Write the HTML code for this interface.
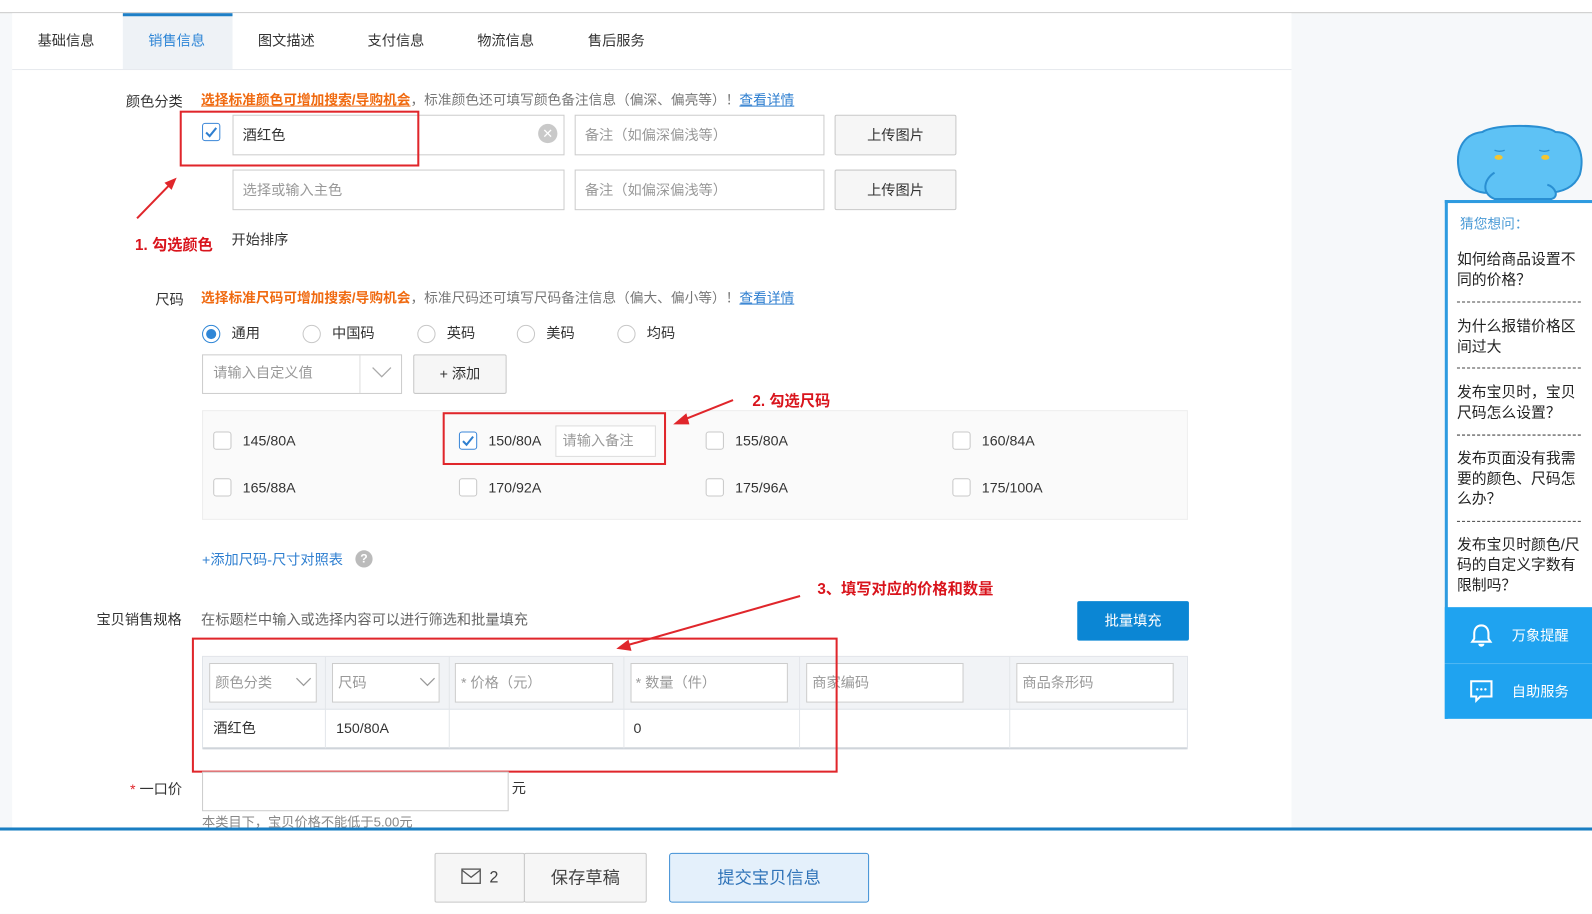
<!DOCTYPE html>
<html><head><meta charset="utf-8"><style>
html,body{margin:0;padding:0;width:1592px;height:911px;overflow:hidden;background:#f6f8fa}
#w{position:absolute;left:0;top:0;width:1568px;height:897px;transform:scale(1.01531);transform-origin:0 0;font-family:"Liberation Sans","Noto Sans CJK SC",sans-serif;font-size:14px;color:#333}
.a{position:absolute}
.t{position:absolute;white-space:nowrap;line-height:1}
.in{position:absolute;border:1px solid #ccc;background:#fff;box-sizing:border-box}
.ph{color:#999}
.cb{position:absolute;width:18px;height:18px;border:1px solid #c8c8c8;border-radius:3px;background:#fff;box-sizing:border-box}
.cbc{border-color:#3a86d8}
.rd{position:absolute;width:18px;height:18px;border:1px solid #c8c8c8;border-radius:50%;background:#fff;box-sizing:border-box}
.red{position:absolute;border:2px solid #e0262b;box-sizing:border-box}
.ann{position:absolute;color:#d9141c;font-weight:bold;font-size:15px;white-space:nowrap;line-height:1}
.btn{position:absolute;border:1px solid #c8c8c8;background:#f6f6f6;box-sizing:border-box;text-align:center;border-radius:2px}
.q{position:absolute;left:1435px;width:122px;font-size:14.6px;line-height:20px;color:#222;word-break:break-all}
.dash{position:absolute;left:1435px;width:122px;border-top:1px dashed #444}
</style></head><body><div id="w">
<div class="a" style="left:0;top:0;width:1568px;height:12px;background:#fff;border-bottom:1px solid #c9c9c9"></div>
<div class="a" style="left:12px;top:13px;width:1260px;height:810px;background:#fff"></div>
<div class="a" style="left:12px;top:68px;width:1260px;height:1px;background:#e6e9ee"></div>
<div class="a" style="left:121px;top:13px;width:108px;height:55px;background:#eef2f6;border-top:3px solid #1e7fc6;box-sizing:border-box"></div>
<div class="t" style="left:37px;top:33px">基础信息</div>
<div class="t" style="left:146px;top:33px;color:#2f86d6">销售信息</div>
<div class="t" style="left:254px;top:33px">图文描述</div>
<div class="t" style="left:362px;top:33px">支付信息</div>
<div class="t" style="left:470px;top:33px">物流信息</div>
<div class="t" style="left:579px;top:33px">售后服务</div>

<div class="t" style="left:124px;top:93px">颜色分类</div>
<div class="t" style="left:198px;top:92px;font-size:13.5px"><span style="color:#f06a10;font-weight:bold;text-decoration:underline">选择标准颜色可增加搜索/导购机会</span><span style="color:#777">，标准颜色还可填写颜色备注信息（偏深、偏亮等）！</span><span style="color:#2f7fd0;text-decoration:underline">查看详情</span></div>

<div class="cb cbc" style="left:199px;top:121px"><svg width="16" height="16" viewBox="0 0 16 16" style="position:absolute;left:0;top:0"><path d="M3 8.5l3.5 3.5L13 4" fill="none" stroke="#2f7fd0" stroke-width="2"/></svg></div>
<div class="in" style="left:229px;top:113px;width:327px;height:40px"></div>
<div class="t" style="left:239px;top:126px">酒红色</div>
<div class="a" style="left:530px;top:122px;width:19px;height:19px;border-radius:50%;background:#c9c9c9;color:#fff;font-size:13px;line-height:19px;text-align:center">✕</div>
<div class="in" style="left:566px;top:113px;width:246px;height:40px"></div>
<div class="t ph" style="left:576px;top:126px">备注（如偏深偏浅等）</div>
<div class="btn" style="left:822px;top:113px;width:120px;height:40px;line-height:38px">上传图片</div>
<div class="red" style="left:177px;top:109px;width:236px;height:55px"></div>

<div class="in" style="left:229px;top:167px;width:327px;height:40px"></div>
<div class="t ph" style="left:239px;top:180px">选择或输入主色</div>
<div class="in" style="left:566px;top:167px;width:246px;height:40px"></div>
<div class="t ph" style="left:576px;top:180px">备注（如偏深偏浅等）</div>
<div class="btn" style="left:822px;top:167px;width:120px;height:40px;line-height:38px">上传图片</div>

<div class="ann" style="left:133px;top:234px">1. 勾选颜色</div>
<div class="t" style="left:228px;top:229px">开始排序</div>

<div class="t" style="left:153px;top:288px">尺码</div>
<div class="t" style="left:198px;top:287px;font-size:13.5px"><span style="color:#f06a10;font-weight:bold">选择标准尺码可增加搜索/导购机会</span><span style="color:#777">，标准尺码还可填写尺码备注信息（偏大、偏小等）！</span><span style="color:#2f7fd0;text-decoration:underline">查看详情</span></div>

<div class="rd" style="left:199px;top:320px;border-color:#2f86d6"><div class="a" style="left:3px;top:3px;width:10px;height:10px;border-radius:50%;background:#2f86d6"></div></div>
<div class="t" style="left:228px;top:321px">通用</div>
<div class="rd" style="left:298px;top:320px"></div><div class="t" style="left:327px;top:321px">中国码</div>
<div class="rd" style="left:411px;top:320px"></div><div class="t" style="left:440px;top:321px">英码</div>
<div class="rd" style="left:509px;top:320px"></div><div class="t" style="left:538px;top:321px">美码</div>
<div class="rd" style="left:608px;top:320px"></div><div class="t" style="left:637px;top:321px">均码</div>

<div class="in" style="left:199px;top:349px;width:197px;height:39px"></div>
<div class="a" style="left:354px;top:350px;width:1px;height:37px;background:#ddd"></div>
<div class="t ph" style="left:210px;top:360px">请输入自定义值</div>
<svg class="a" style="left:366px;top:360px" width="20" height="14"><path d="M1 2l9 9 9-9" fill="none" stroke="#aaa" stroke-width="1.3"/></svg>
<div class="btn" style="left:407px;top:349px;width:92px;height:39px;line-height:37px">+ 添加</div>
<div class="ann" style="left:741px;top:388px">2. 勾选尺码</div>

<div class="a" style="left:199px;top:404px;width:971px;height:108px;background:#fafafa;border:1px solid #eee;box-sizing:border-box"></div>
<div class="cb" style="left:210px;top:425px"></div><div class="t" style="left:239px;top:427px">145/80A</div>
<div class="cb cbc" style="left:452px;top:425px"><svg width="16" height="16" viewBox="0 0 16 16" style="position:absolute;left:0;top:0"><path d="M3 8.5l3.5 3.5L13 4" fill="none" stroke="#2f7fd0" stroke-width="2"/></svg></div>
<div class="t" style="left:481px;top:427px">150/80A</div>
<div class="in" style="left:547px;top:419px;width:99px;height:31px;border-color:#ddd"></div>
<div class="t ph" style="left:554px;top:427px">请输入备注</div>
<div class="red" style="left:436px;top:406px;width:220px;height:52px"></div>
<div class="cb" style="left:695px;top:425px"></div><div class="t" style="left:724px;top:427px">155/80A</div>
<div class="cb" style="left:938px;top:425px"></div><div class="t" style="left:967px;top:427px">160/84A</div>
<div class="cb" style="left:210px;top:471px"></div><div class="t" style="left:239px;top:473px">165/88A</div>
<div class="cb" style="left:452px;top:471px"></div><div class="t" style="left:481px;top:473px">170/92A</div>
<div class="cb" style="left:695px;top:471px"></div><div class="t" style="left:724px;top:473px">175/96A</div>
<div class="cb" style="left:938px;top:471px"></div><div class="t" style="left:967px;top:473px">175/100A</div>

<div class="t" style="left:199px;top:544px;color:#2f7fd0">+添加尺码-尺寸对照表</div>
<div class="a" style="left:350px;top:542px;width:17px;height:17px;border-radius:50%;background:#bbb;color:#fff;font-size:12px;line-height:17px;text-align:center;font-weight:bold">?</div>

<div class="ann" style="left:805px;top:573px">3、填写对应的价格和数量</div>
<div class="t" style="left:95px;top:603px">宝贝销售规格</div>
<div class="t" style="left:198px;top:603px;color:#666">在标题栏中输入或选择内容可以进行筛选和批量填充</div>
<div class="a" style="left:1061px;top:592px;width:110px;height:39px;background:#0b86d4;border-radius:2px;color:#fff;text-align:center;line-height:39px">批量填充</div>

<div class="a" style="left:199px;top:646px;width:971px;height:92px;border:1px solid #dfe3e8;box-sizing:border-box"></div>
<div class="a" style="left:200px;top:647px;width:969px;height:51px;background:#f1f3f6;border-bottom:1px solid #dfe3e8"></div>
<div class="a" style="left:200px;top:736px;width:969px;height:2px;background:#cfd4da"></div>
<div class="a" style="left:320px;top:647px;width:1px;height:90px;background:#e3e6ea"></div>
<div class="a" style="left:442px;top:647px;width:1px;height:90px;background:#e3e6ea"></div>
<div class="a" style="left:614px;top:647px;width:1px;height:90px;background:#e3e6ea"></div>
<div class="a" style="left:787px;top:647px;width:1px;height:90px;background:#e3e6ea"></div>
<div class="a" style="left:994px;top:647px;width:1px;height:90px;background:#e3e6ea"></div>
<div class="in" style="left:206px;top:653px;width:106px;height:39px"></div><div class="t ph" style="left:212px;top:665px">颜色分类</div>
<svg class="a" style="left:291px;top:666px" width="16" height="12"><path d="M1 2l7 7 7-7" fill="none" stroke="#999" stroke-width="1.2"/></svg>
<div class="in" style="left:327px;top:653px;width:106px;height:39px"></div><div class="t ph" style="left:333px;top:665px">尺码</div>
<svg class="a" style="left:413px;top:666px" width="16" height="12"><path d="M1 2l7 7 7-7" fill="none" stroke="#999" stroke-width="1.2"/></svg>
<div class="in" style="left:448px;top:653px;width:156px;height:39px"></div><div class="t ph" style="left:454px;top:665px">* 价格（元）</div>
<div class="in" style="left:621px;top:653px;width:155px;height:39px"></div><div class="t ph" style="left:626px;top:665px">* 数量（件）</div>
<div class="in" style="left:794px;top:653px;width:155px;height:39px"></div><div class="t ph" style="left:800px;top:665px">商家编码</div>
<div class="in" style="left:1001px;top:653px;width:155px;height:39px"></div><div class="t ph" style="left:1007px;top:665px">商品条形码</div>
<div class="t" style="left:210px;top:710px">酒红色</div>
<div class="t" style="left:331px;top:710px">150/80A</div>
<div class="t" style="left:624px;top:710px">0</div>
<div class="red" style="left:189px;top:628px;width:636px;height:133px"></div>

<svg class="a" style="left:0;top:0" width="1200" height="800">
<g stroke="#e0262b" stroke-width="2" fill="#e0262b">
<line x1="135" y1="215" x2="168" y2="181"/><polygon points="174,175 162,180 169,187" stroke="none"/>
<line x1="722" y1="394" x2="672" y2="414"/><polygon points="663,418 676,407 679,418" stroke="none"/>
<line x1="788" y1="587" x2="616" y2="636"/><polygon points="607,639 619,630 622,641" stroke="none"/>
</g></svg>

<div class="t" style="left:128px;top:770px"><span style="color:#e0262b">*</span> 一口价</div>
<div class="in" style="left:199px;top:760px;width:302px;height:39px"></div>
<div class="t" style="left:504px;top:769px">元</div>
<div class="t" style="left:199px;top:803px;color:#888;font-size:13px">本类目下，宝贝价格不能低于5.00元</div>

<div class="a" style="left:0;top:815px;width:1568px;height:82px;background:#fff;border-top:3px solid #1a7ec2"></div>
<div class="btn" style="left:428px;top:840px;width:89px;height:49px;line-height:47px;font-size:16px;color:#444">
<svg width="20" height="16" style="vertical-align:-2px;margin-right:8px"><rect x="1" y="1" width="18" height="14" fill="none" stroke="#555" stroke-width="1.3"/><path d="M1 2l9 7 9-7" fill="none" stroke="#555" stroke-width="1.3"/></svg>2</div>
<div class="btn" style="left:516px;top:840px;width:121px;height:49px;line-height:47px;font-size:17px;color:#444">保存草稿</div>
<div class="a" style="left:659px;top:840px;width:197px;height:49px;background:#e4f0fb;border:1px solid #3f8fd5;box-sizing:border-box;border-radius:3px;text-align:center;line-height:47px;font-size:17px;color:#2f73b8">提交宝贝信息</div>

<svg class="a" style="left:1432px;top:120px" width="130" height="82" viewBox="0 0 130 82">
<path d="M28 10 C8 12 0 30 6 52 C12 66 24 70 34 70 L90 70 C104 70 118 66 124 52 C130 30 120 10 100 10 C90 2 40 2 28 10Z" fill="#5ec2f5" stroke="#2a8fd2" stroke-width="2"/>
<path d="M40 50 C30 56 26 70 40 76 L96 76 C104 74 100 64 92 62" fill="#5ec2f5" stroke="#2a8fd2" stroke-width="2"/>
<ellipse cx="44" cy="35" rx="4" ry="2.5" fill="#f4c531"/><ellipse cx="90" cy="35" rx="4" ry="2.5" fill="#f4c531"/>
<path d="M40 28 q5 2 10 0 M84 28 q5 2 10 0" stroke="#2a8fd2" stroke-width="1.3" fill="none"/>
</svg>
<div class="a" style="left:1423px;top:197px;width:145px;height:511px;background:#fff;border-left:3px solid #2e9be0;border-top:3px solid #2e9be0;box-sizing:border-box"></div>
<div class="t" style="left:1438px;top:214px;color:#4a9ad6;font-size:13.5px">猜您想问：</div>
<div class="q" style="top:246px">如何给商品设置不同的价格？</div>
<div class="dash" style="top:297px"></div>
<div class="q" style="top:312px">为什么报错价格区间过大</div>
<div class="dash" style="top:362px"></div>
<div class="q" style="top:377px">发布宝贝时，宝贝尺码怎么设置？</div>
<div class="dash" style="top:428px"></div>
<div class="q" style="top:442px">发布页面没有我需要的颜色、尺码怎么办？</div>
<div class="dash" style="top:513px"></div>
<div class="q" style="top:527px">发布宝贝时颜色/尺码的自定义字数有限制吗？</div>
<div class="a" style="left:1423px;top:598px;width:145px;height:55px;background:#1fa3f0"></div>
<div class="a" style="left:1423px;top:653px;width:145px;height:1px;background:#4db6f3"></div>
<div class="a" style="left:1423px;top:654px;width:145px;height:54px;background:#1fa3f0"></div>
<svg class="a" style="left:1448px;top:614px" width="22" height="24"><path d="M11 2c-5 0-7 4-7 8v5l-2 3h18l-2-3v-5c0-4-2-8-7-8z" fill="none" stroke="#fff" stroke-width="2"/><path d="M8 20a3 3 0 0 0 6 0" fill="#fff"/></svg>
<div class="t" style="left:1489px;top:619px;color:#fff;font-size:14px">万象提醒</div>
<svg class="a" style="left:1447px;top:669px" width="24" height="24"><path d="M2 2h20v15H11l-4 4v-4H2z" fill="none" stroke="#fff" stroke-width="2"/><circle cx="8" cy="10" r="1.2" fill="#fff"/><circle cx="12" cy="10" r="1.2" fill="#fff"/><circle cx="16" cy="10" r="1.2" fill="#fff"/></svg>
<div class="t" style="left:1489px;top:674px;color:#fff;font-size:14px">自助服务</div>
</div></body></html>
